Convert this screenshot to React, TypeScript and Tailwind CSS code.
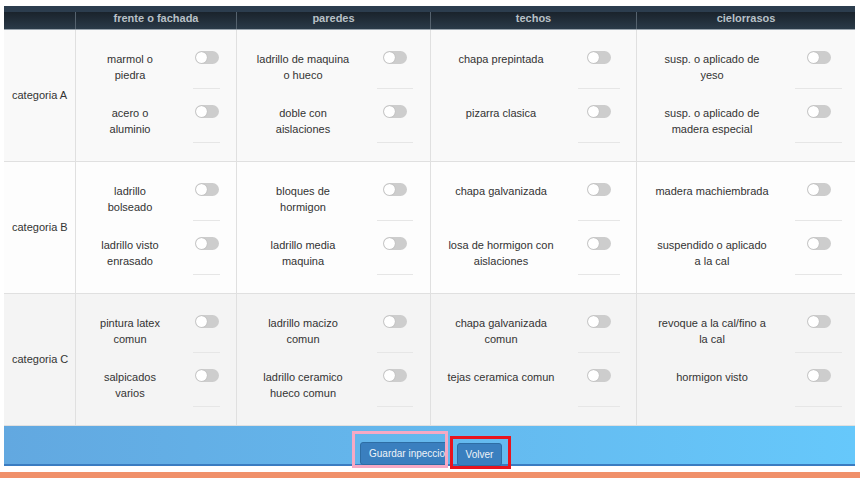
import React from "react";

// Configuración de columnas: anchos del texto y del área del interruptor
const columns = [
  { title: "frente o fachada", label: "ml-[18px] w-[72px]", sep: "w-[27px]", pr: "pr-[16px]" },
  { title: "paredes", label: "ml-[18px] w-[96px]", sep: "w-[36px]", pr: "pr-[17px]" },
  { title: "techos", label: "ml-[12px] w-[116px]", sep: "w-[42px]", pr: "pr-[16px]" },
  { title: "cielorrasos", label: "ml-[17px] w-[116px]", sep: "w-[47px]", pr: "pr-[13px]" },
];

const rows = [
  {
    name: "categoria A",
    bg: "bg-[#f9f9f9]",
    cells: [
      ["marmol o piedra", "acero o aluminio"],
      ["ladrillo de maquina o hueco", "doble con aislaciones"],
      ["chapa prepintada", "pizarra clasica"],
      ["susp. o aplicado de yeso", "susp. o aplicado de madera especial"],
    ],
  },
  {
    name: "categoria B",
    bg: "bg-[#fdfdfd]",
    cells: [
      ["ladrillo bolseado", "ladrillo visto enrasado"],
      ["bloques de hormigon", "ladrillo media maquina"],
      ["chapa galvanizada", "losa de hormigon con aislaciones"],
      ["madera machiembrada", "suspendido o aplicado a la cal"],
    ],
  },
  {
    name: "categoria C",
    bg: "bg-[#f4f4f4]",
    cells: [
      ["pintura latex comun", "salpicados varios"],
      ["ladrillo macizo comun", "ladrillo ceramico hueco comun"],
      ["chapa galvanizada comun", "tejas ceramica comun"],
      ["revoque a la cal/fino a la cal", "hormigon visto"],
    ],
  },
];

const Toggle: React.FC = () => (
  <div className="relative w-[24px] h-[13px] rounded-full bg-[#cdcdcd]">
    <div className="absolute left-[1px] top-[1px] w-[11px] h-[11px] rounded-full bg-white shadow-[0_0_1px_rgba(0,0,0,0.3)]"></div>
  </div>
);

const App: React.FC = () => {
  return (
    <div
      className="w-[860px] h-[478px] bg-white overflow-hidden pt-[6px]"
      style={{ fontFamily: "'Liberation Sans', Arial, Helvetica, sans-serif" }}
    >
      <div className="ml-[4px] w-[851px]">
        <div className="h-[6px] bg-[#2c3d4e]"></div>
        <div className="grid grid-cols-[71px_161px_194px_206px_219px] h-[18px] bg-gradient-to-b from-[#1a232c] to-[#2a3a48] border-b border-[#9aa4ad]">
          <div></div>
          {columns.map((col) => (
            <div
              key={col.title}
              className="border-l border-[#55626e] text-center text-[11px] font-bold leading-[13px] text-[#b8c0c7]"
            >
              {col.title}
            </div>
          ))}
        </div>

        {rows.map((row) => (
          <div
            key={row.name}
            className={`grid grid-cols-[71px_161px_194px_206px_219px] h-[132px] border-b border-[#e0e0e0] ${row.bg}`}
          >
            <div className="flex items-center pl-[8px] text-[11px] text-[#333]">
              {row.name}
            </div>
            {row.cells.map((items, ci) => {
              const col = columns[ci];
              return (
                <div
                  key={ci}
                  className={`border-l border-[#e0e0e0] pt-[5px] ${col.pr}`}
                >
                  {items.map((item) => (
                    <div key={item} className="flex h-[54px] justify-between">
                      <div
                        className={`${col.label} pt-[16px] text-center text-[11px] leading-[16px] text-[#333]`}
                      >
                        {item}
                      </div>
                      <div
                        className={`${col.sep} flex justify-center pt-[16px] border-b border-[#e6e6e6]`}
                      >
                        <Toggle />
                      </div>
                    </div>
                  ))}
                </div>
              );
            })}
          </div>
        ))}

        <div className="flex justify-center gap-[2px] pl-[4px] h-[40px] bg-gradient-to-r from-[#62a8e0] to-[#66c8fb] border-b-2 border-[#3a7cc1]">
          <div className="mt-[5px] h-[37px] w-[96px] border-[3px] border-[#f6a9c4] overflow-hidden flex items-end pl-[5px]">
            <button className="h-[23px] px-[8px] whitespace-nowrap rounded-[3px] bg-[#3a7fbf] border border-[#2e6da4] text-[10px] text-[#eef3f8]">
              Guardar inpeccion
            </button>
          </div>
          <div className="mt-[10px] h-[33px] w-[61px] border-[3px] border-[#e8141e] flex items-end pl-[4px]">
            <button className="h-[23px] w-[45px] rounded-[3px] bg-[#3a7fbf] border border-[#2e6da4] text-[10px] text-[#eef3f8]">
              Volver
            </button>
          </div>
        </div>
      </div>
      <div className="mt-[6px] h-[6px] bg-[#f0906a]"></div>
    </div>
  );
};

export default App;
